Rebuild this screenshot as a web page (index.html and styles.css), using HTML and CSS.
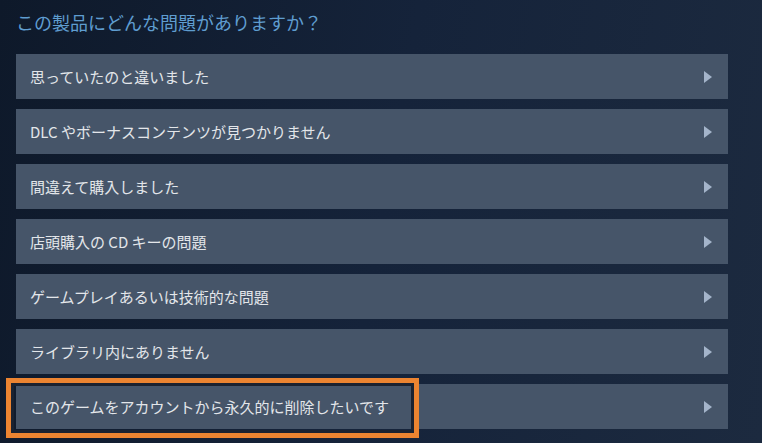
FILE: index.html
```html
<!DOCTYPE html>
<html>
<head>
    <meta charset="UTF-8">
    <title>この製品にどんな問題がありますか？</title>
    <link rel="stylesheet" href="styles.css">
</head>
<body>
    <div class="wizard">
        <h2 class="title">この製品にどんな問題がありますか？</h2>
        <div class="options">
            <a class="option">思っていたのと違いました<span class="arrow"></span></a>
            <a class="option">DLC やボーナスコンテンツが見つかりません<span class="arrow"></span></a>
            <a class="option">間違えて購入しました<span class="arrow"></span></a>
            <a class="option">店頭購入の CD キーの問題<span class="arrow"></span></a>
            <a class="option">ゲームプレイあるいは技術的な問題<span class="arrow"></span></a>
            <a class="option">ライブラリ内にありません<span class="arrow"></span></a>
            <a class="option selected">このゲームをアカウントから永久的に削除したいです<span class="arrow"></span><span class="highlight"></span></a>
        </div>
    </div>
</body>
</html>
```

FILE: styles.css
```css
html, body {
    margin: 0;
    height: 100%;
}
body {
    font-family: "Noto Sans CJK JP", "Liberation Sans", sans-serif;
    background: linear-gradient(100deg, #0e192a 0%, #15233a 50%, #1c2a3f 100%);
    overflow: hidden;
}
.wizard {
    padding: 8px 34px 0 16px;
}
.title {
    margin: 0;
    height: 46px;
    font-size: 18px;
    font-weight: normal;
    line-height: 28px;
    color: #5f9dd0;
}
.options {
    display: flex;
    flex-direction: column;
    gap: 10px;
}
.option {
    position: relative;
    display: flex;
    align-items: center;
    justify-content: space-between;
    height: 45px;
    padding: 0 16px 0 14px;
    background: #465569;
    color: #e3e6ea;
    font-size: 15px;
    cursor: pointer;
}
.arrow {
    width: 0;
    height: 0;
    border-top: 6px solid transparent;
    border-bottom: 6px solid transparent;
    border-left: 8px solid #a4b4ca;
}
.highlight {
    position: absolute;
    left: -10px;
    top: -6px;
    width: 413px;
    height: 60px;
    box-sizing: border-box;
    border: 5px solid #ec8431;
    box-shadow: inset 0 0 0 3px #1b2230;
}
```
